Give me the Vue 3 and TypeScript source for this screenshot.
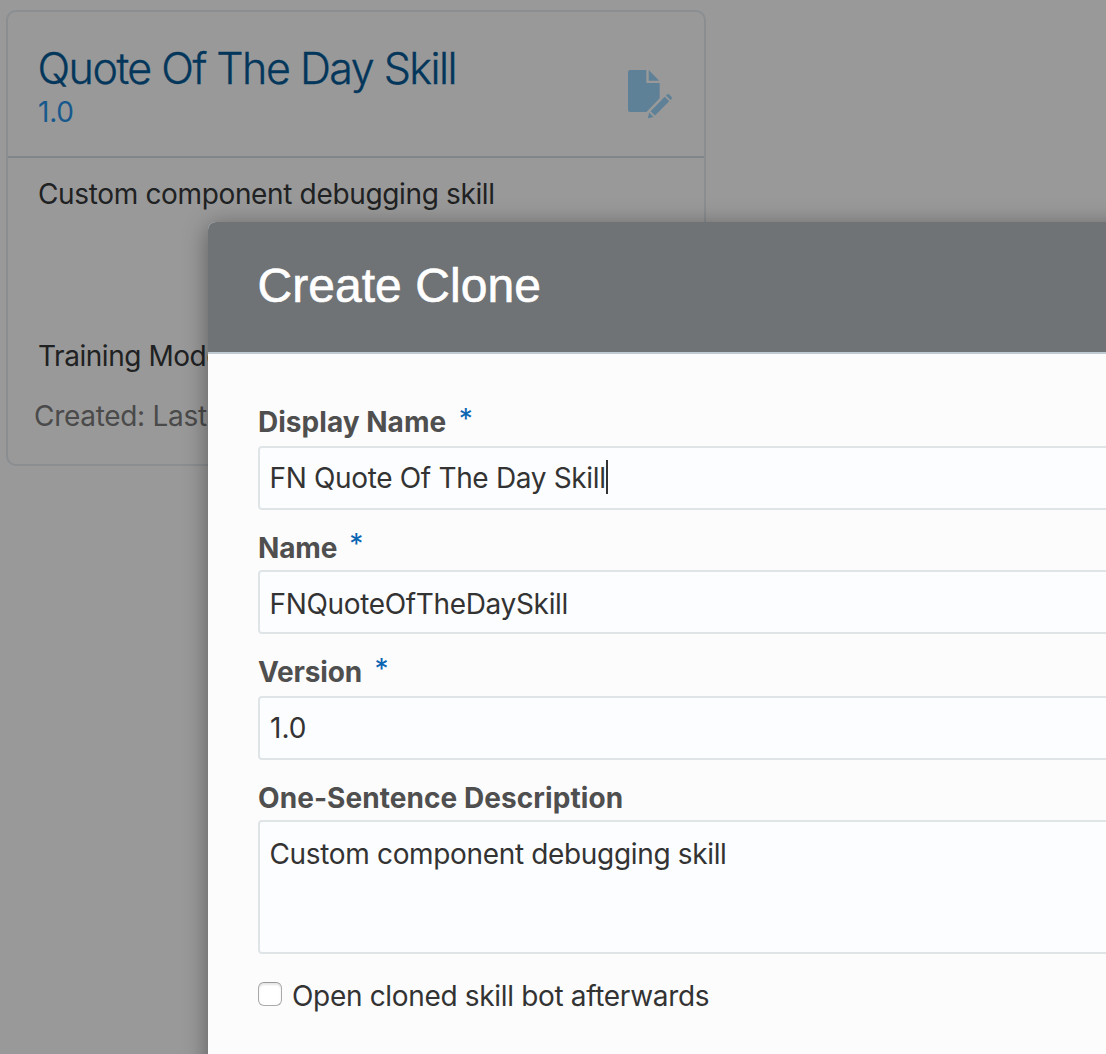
<script setup lang="ts">
import { ref } from 'vue'

interface Field {
  id: string
  label: string
  value: string
  required: boolean
  multiline?: boolean
  focused?: boolean
}

const skill = {
  name: 'Quote Of The Day Skill',
  version: '1.0',
  description: 'Custom component debugging skill',
  model: 'Training Mode',
  created: 'Created: Last',
}

const fields: Field[] = [
  { id: 'display', label: 'Display Name', value: 'FN Quote Of The Day Skill', required: true, focused: true },
  { id: 'name', label: 'Name', value: 'FNQuoteOfTheDaySkill', required: true },
  { id: 'version', label: 'Version', value: '1.0', required: true },
  { id: 'description', label: 'One-Sentence Description', value: skill.description, required: false, multiline: true },
]

const openAfterwards = ref(false)
</script>

<template>
  <div class="page">
    <article class="card">
      <header class="card-head">
        <div>
          <h2 class="skill-name">{{ skill.name }}</h2>
          <p class="skill-version">{{ skill.version }}</p>
        </div>
        <svg class="draft-icon" width="46" height="50" viewBox="0 0 46 50" aria-hidden="true">
          <path d="M2 0H18.3V13H31.7V28.3L18.5 42H2Q0 42 0 40V2Q0 0 2 0Z" />
          <path d="M20.7 0L31.2 10.8H20.7Z" />
          <path d="M36.8 26.7L41.2 31.3L27 45.6L22.6 41.2Z" />
          <path d="M38 25.5L39.2 24.3Q40.2 23.5 41.2 24.4L43.6 26.9Q44.4 28 43.6 29L42.5 30.1Z" />
          <path d="M21.2 42.6L25.5 47L20.2 48.2Q19.8 48.2 20 47.6Z" />
        </svg>
      </header>
      <div class="card-body">
        <p class="skill-description">{{ skill.description }}</p>
        <p class="skill-model">{{ skill.model }}</p>
        <p class="skill-created">{{ skill.created }}</p>
      </div>
    </article>

    <section class="dialog" role="dialog" aria-label="Create Clone">
      <header class="dialog-head"><h1>Create Clone</h1></header>
      <form class="dialog-body" @submit.prevent>
        <div v-for="f in fields" :key="f.id" class="field" :class="f.id">
          <div class="label">
            <span class="label-text">{{ f.label }}</span><span v-if="f.required" class="star">*</span>
          </div>
          <div class="box" :class="{ multiline: f.multiline }">
            <span>{{ f.value }}</span><i v-if="f.focused" class="caret"></i>
          </div>
        </div>
        <label class="option">
          <input v-model="openAfterwards" type="checkbox" />
          <span>Open cloned skill bot afterwards</span>
        </label>
      </form>
    </section>
  </div>
</template>

<style>
body {
  background: #999;
}
</style>

<style scoped>
.page {
  position: relative;
  box-sizing: border-box;
  height: 1054px;
  padding: 10px 0 0 6px;
  overflow: hidden;
  background: #999;
  font: 28px/36px Inter, "Noto Sans", sans-serif;
  white-space: nowrap;
}
h1,
h2,
p {
  margin: 0;
  font-weight: 400;
}
.card {
  box-sizing: border-box;
  width: 700px;
  height: 456px;
  border: 2px solid #8a8e91;
  border-radius: 10px;
}
.card-head {
  display: flex;
  justify-content: space-between;
  box-sizing: border-box;
  height: 146px;
  padding: 30px 30px 0 29.5px;
  border-bottom: 2px solid #80868a;
}
.skill-name {
  color: #03365b;
  font-size: 43px;
  font-weight: 300;
  line-height: 52px;
  letter-spacing: -1.52px;
  -webkit-text-stroke: 0.35px #03365b;
}
.skill-version {
  margin-left: 0.5px;
  color: #17598d;
  letter-spacing: -0.2px;
}
.draft-icon {
  margin-top: 28px;
  fill: #5f8197;
}
.card-body {
  padding: 18px 0 0 30px;
  color: #202122;
  letter-spacing: -0.35px;
}
.skill-model {
  margin-top: 126px;
  letter-spacing: -0.45px;
}
.skill-created {
  width: 176px;
  margin: 24px 0 0 -4px;
  overflow: hidden;
  color: #4a4a4a;
  letter-spacing: -0.3px;
}
.dialog {
  position: absolute;
  top: 222px;
  left: 208px;
  width: 1000px;
  height: 900px;
  border-radius: 8px;
  background: #fcfcfc;
  box-shadow: 0 4px 24px rgba(0, 0, 0, 0.4);
}
.dialog-head {
  box-sizing: border-box;
  height: 132px;
  padding: 36px 0 0 49.5px;
  border-bottom: 2px solid #bfcad2;
  border-radius: 8px 8px 0 0;
  background: #6f7375;
}
.dialog-head h1 {
  color: #fff;
  font-family: "Liberation Sans", Arial, sans-serif;
  font-size: 48px;
  line-height: 56px;
  letter-spacing: 0.05px;
  -webkit-text-stroke: 0.6px #fff;
}
.dialog-body {
  padding: 30px 0 0 50px;
  color: #333;
}
.label {
  display: flex;
  box-sizing: border-box;
  height: 60px;
  padding-top: 20px;
  color: #4f4f4f;
}
.display .label,
.version .label {
  height: 62px;
}
.label-text {
  font-weight: 700;
  letter-spacing: 0.03px;
}
.name .label-text,
.version .label-text {
  letter-spacing: -0.15px;
}
.description .label-text {
  letter-spacing: 0.07px;
}
.star {
  margin: -3px 0 0 12.5px;
  color: #0a65b3;
}
.name .star {
  margin-top: -4px;
  margin-left: 12px;
}
.box {
  display: flex;
  box-sizing: border-box;
  height: 64px;
  padding: 12px 0 0 9.5px;
  border: 2px solid #dfe4e7;
  border-radius: 4px;
  background: #fcfdff;
  letter-spacing: -0.34px;
}
.name .box,
.description .box {
  padding-top: 14px;
}
.version .box {
  padding-left: 10px;
  letter-spacing: 0;
}
.multiline {
  height: 134px;
}
.caret {
  width: 2px;
  height: 34px;
  margin-left: 0.7px;
  background: #333;
}
.option {
  display: flex;
  margin-top: 24px;
  letter-spacing: -0.33px;
}
.option input {
  appearance: none;
  box-sizing: border-box;
  width: 24px;
  height: 24px;
  margin: 4px 10px 0 0;
  border: 1.5px solid #aaa;
  border-top-color: #999;
  border-radius: 6px;
  background: #fff;
  box-shadow: inset 0 2px 2px rgba(0, 0, 0, 0.1);
}
</style>
